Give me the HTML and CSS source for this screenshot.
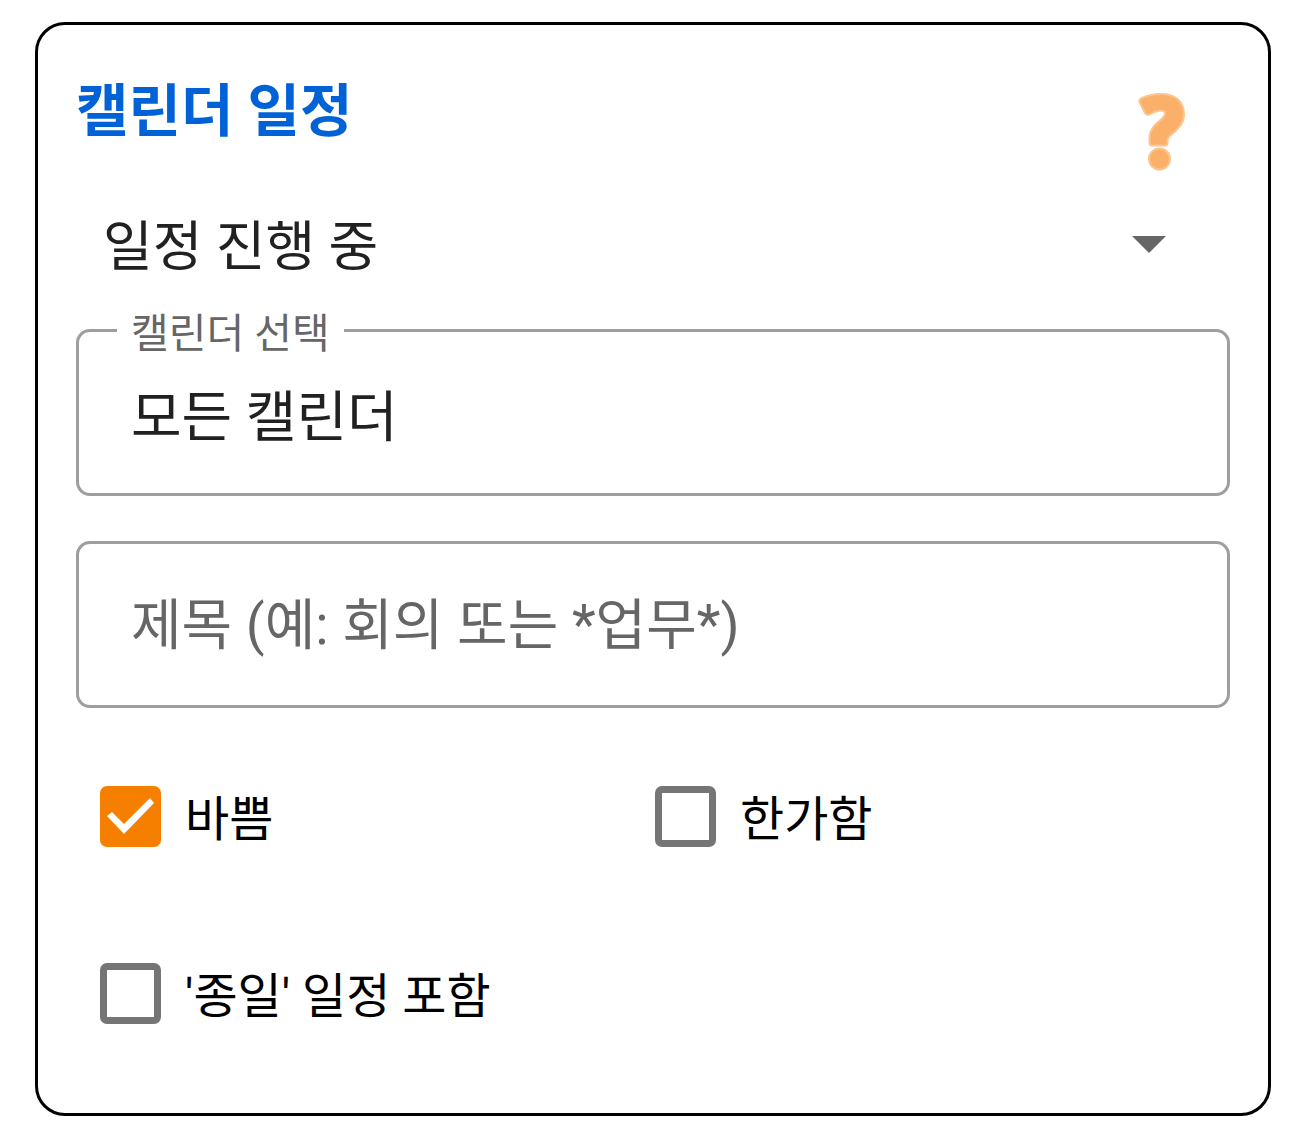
FILE: index.html
```
<!DOCTYPE html>
<html lang="ko">
<head>
  <meta charset="UTF-8">
  <meta name="viewport" content="width=device-width, initial-scale=1.0">
  <title>캘린더 일정</title>
  <link rel="stylesheet" href="styles.css">
</head>
<body>
  <form class="card">
    <header class="card-header">
      <h1>캘린더 일정</h1>
      <button class="help" type="button" aria-label="도움말">
        <svg viewBox="0 0 48 79" width="48" height="79" fill="#fbb069" stroke="#fcc48e" stroke-width="2" stroke-linejoin="round">
          <path d="M1.5 10Q0.6 8 3 6.500Q12 2 23 2Q34 2 40 7.500Q46 13 46 22Q46 29 42 34Q39 38 33.500 42.500Q29.500 45.500 29.500 49L29.500 51Q29.500 53.500 27 53.500L14 53.500Q11.500 53.500 11.500 51L11.500 46Q11.500 39 17 33Q19 31 22.500 28Q27 24 27 21.500Q27 18 22 18.500Q16 19.500 11 22.500Q8.500 23.500 7 21Z"/>
          <circle cx="21.500" cy="67" r="10.500"/>
        </svg>
      </button>
    </header>

    <select class="state" aria-label="일정 상태">
      <option>일정 진행 중</option>
      <option>일정 시작</option>
      <option>일정 종료</option>
    </select>

    <fieldset class="outlined">
      <legend><label for="calendar">캘린더 선택</label></legend>
      <input type="text" id="calendar" value="모든 캘린더">
    </fieldset>

    <input class="title-input" type="text" aria-label="제목" placeholder="제목 (예: 회의 또는 *업무*)">

    <div class="options">
      <label><input type="checkbox" checked>바쁨</label>
      <label><input type="checkbox">한가함</label>
      <label><input type="checkbox">'종일' 일정 포함</label>
    </div>
  </form>
</body>
</html>
```
FILE: styles.css
```
* { box-sizing: border-box; }
body { margin: 0; padding: 22px 29px 24px 35px; background: #fff; color: #212121; font-family: Roboto, "Noto Sans CJK KR", sans-serif; }
input, select { font-family: inherit; color: inherit; margin: 0; }
input { font-size: 55px; }

.card { border: 3px solid #000; border-radius: 30px; padding: 44px 38px 83px; }
.card-header { display: flex; justify-content: space-between; align-items: flex-start; padding-right: 44px; }
h1 { margin: 0; font-size: 57px; line-height: 86px; font-weight: 700; color: #0062d6; }
.help { margin: 23px 0 0; padding: 0; border: none; background: none; cursor: pointer; }
.help svg { display: block; }

.state { display: block; width: 100%; height: 100px; margin-top: 23px; padding: 6px 64px 0 27px; border: none; font-size: 54px; appearance: none; background: url("data:image/svg+xml,%3Csvg xmlns='http://www.w3.org/2000/svg' width='34' height='17'%3E%3Cpath d='M0 0h34L17 17z' fill='%23666'/%3E%3C/svg%3E") no-repeat right 64px center; }

.outlined { margin: 10px 0 0; padding: 0 38px 25px; border: 3px solid #9e9e9e; border-radius: 14px; min-width: 0; }
.outlined legend { padding: 8px 14px 0; font-size: 41px; line-height: 44px; color: #666; }
.outlined input { display: block; width: 100%; height: 112px; padding: 0 14px; border: none; outline: none; background: none; }

.title-input { display: block; width: 100%; height: 167px; margin-top: 45px; padding: 0 52px; border: 3px solid #9e9e9e; border-radius: 14px; outline: none; }
.title-input::placeholder { color: #666; opacity: 1; }

.options { display: grid; grid-template-columns: 1fr 1fr; row-gap: 110px; padding: 78px 20px 0 24px; }
.options label { display: flex; align-items: flex-start; gap: 24px; font-size: 48px; line-height: 67px; color: #000; }
.options input { appearance: none; flex: none; width: 61px; height: 61px; border: 7px solid #757575; border-radius: 7px; }
.options input:checked { border: none; background: #f77f00; }
.options input:checked::before { content: ""; display: block; width: 61px; height: 61px; background: #fff; clip-path: polygon(7px 30px, 12px 26px, 24px 38px, 50px 12px, 54px 17px, 24px 48px); }
```
